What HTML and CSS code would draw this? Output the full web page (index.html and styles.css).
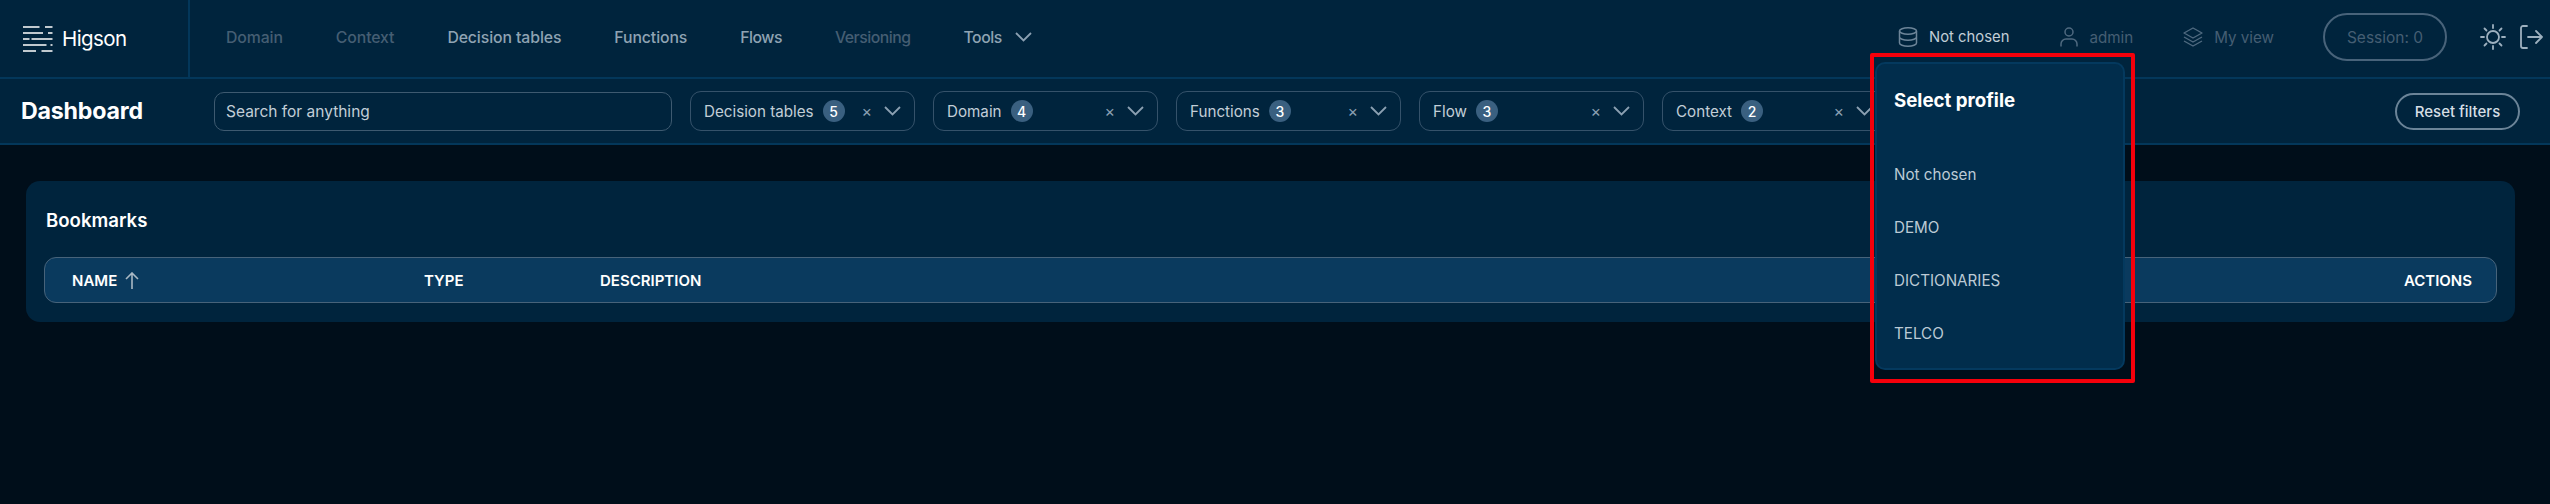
FILE: index.html
```html
<!DOCTYPE html>
<html lang="en">
<head>
<meta charset="utf-8">
<title>Higson Dashboard</title>
<link rel="stylesheet" href="styles.css">
</head>
<body>
<div class="page">
  <header class="topbar">
    <div class="brand">
      <svg class="logo" width="30" height="26" viewBox="0 0 30 26" fill="none" stroke="#fff" stroke-width="1.6">
        <path d="M0 1h16.500M22 1h7.500M0 7h20M25 7h4.500M0 13h6.500M8.500 13h21M0 19h23.500M27.500 19h2M0 25h13M18.500 25h11"/>
      </svg>
      <span class="brand-name">Higson</span>
    </div>
    <nav class="nav">
      <span class="nav-item muted">Domain</span>
      <span class="nav-item muted">Context</span>
      <span class="nav-item">Decision tables</span>
      <span class="nav-item">Functions</span>
      <span class="nav-item tight">Flows</span>
      <span class="nav-item muted tight">Versioning</span>
      <span class="nav-item tight tools">Tools
        <svg width="17" height="10" viewBox="0 0 17 10" fill="none" stroke="#8ba0b2" stroke-width="1.800"><path d="M1 1l7.500 7.500L16 1"/></svg>
      </span>
    </nav>
    <div class="user">
      <span class="user-item active">
        <svg width="20" height="20" viewBox="0 0 20 20" fill="none" stroke="#6d8599" stroke-width="1.500"><ellipse cx="10" cy="4" rx="8.500" ry="3.200"/><path d="M1.500 4v12c0 1.800 3.800 3.200 8.500 3.200s8.500-1.400 8.500-3.200V4M1.500 10c0 1.800 3.800 3.200 8.500 3.200s8.500-1.400 8.500-3.200"/></svg>
        Not chosen
      </span>
      <span class="user-item dim admin">
        <svg width="18" height="20" viewBox="0 0 18 20" fill="none" stroke="#4f6a80" stroke-width="1.500"><circle cx="9" cy="5" r="4"/><path d="M1 19.500v-2.500a5 5 0 0 1 5-5h6a5 5 0 0 1 5 5v2.500"/></svg>
        admin
      </span>
      <span class="user-item dim last">
        <svg width="20" height="20" viewBox="0 0 20 20" fill="none" stroke="#4f6a80" stroke-width="1.400" stroke-linejoin="round"><path d="M10 1l9 5-9 5-9-5zM1 10l9 5 9-5M1 14l9 5 9-5"/></svg>
        My view
      </span>
      <span class="session">Session: 0</span>
      <svg class="sun" width="26" height="26" viewBox="0 0 26 26" fill="none" stroke="#9db0bf" stroke-width="1.800" stroke-linecap="round"><circle cx="13" cy="13" r="6"/><path d="M13 1v3M13 22v3M1 13h3M22 13h3M4.500 4.500l2 2M19.500 19.500l2 2M4.500 21.500l2-2M19.500 6.500l2-2"/></svg>
      <svg width="23" height="24" viewBox="0 0 23 24" fill="none" stroke="#9db0bf" stroke-width="1.800" stroke-linecap="round" stroke-linejoin="round"><path d="M7 1H3a2 2 0 0 0-2 2v18a2 2 0 0 0 2 2h4M8 12h14M16 6l6 6-6 6"/></svg>
    </div>
  </header>

  <section class="filterbar">
    <h1 class="title">Dashboard</h1>
    <div class="search">Search for anything</div>
    <div class="filter"><span>Decision tables</span><b class="badge">5</b><i class="clear">×</i><svg class="chev" width="17" height="10" viewBox="0 0 17 10" fill="none" stroke="#8ba0b2" stroke-width="1.800"><path d="M1 1l7.500 7.500L16 1"/></svg></div>
    <div class="filter"><span>Domain</span><b class="badge">4</b><i class="clear">×</i><svg class="chev" width="17" height="10" viewBox="0 0 17 10" fill="none" stroke="#8ba0b2" stroke-width="1.800"><path d="M1 1l7.500 7.500L16 1"/></svg></div>
    <div class="filter"><span>Functions</span><b class="badge">3</b><i class="clear">×</i><svg class="chev" width="17" height="10" viewBox="0 0 17 10" fill="none" stroke="#8ba0b2" stroke-width="1.800"><path d="M1 1l7.500 7.500L16 1"/></svg></div>
    <div class="filter"><span>Flow</span><b class="badge">3</b><i class="clear">×</i><svg class="chev" width="17" height="10" viewBox="0 0 17 10" fill="none" stroke="#8ba0b2" stroke-width="1.800"><path d="M1 1l7.500 7.500L16 1"/></svg></div>
    <div class="filter"><span>Context</span><b class="badge">2</b><i class="clear">×</i><svg class="chev" width="17" height="10" viewBox="0 0 17 10" fill="none" stroke="#8ba0b2" stroke-width="1.800"><path d="M1 1l7.500 7.500L16 1"/></svg></div>
    <button class="reset">Reset filters</button>
  </section>

  <main class="main">
    <section class="card">
      <h2 class="card-title">Bookmarks</h2>
      <div class="thead">
        <span class="col col-name">NAME
          <svg width="14" height="17" viewBox="0 0 14 17" fill="none" stroke="#a9b8c4" stroke-width="1.600"><path d="M7 17V1M1 7l6-6 6 6"/></svg>
        </span>
        <span class="col col-type">TYPE</span>
        <span class="col col-desc">DESCRIPTION</span>
        <span class="col col-actions">ACTIONS</span>
      </div>
    </section>
  </main>

  <div class="dropdown">
    <div class="dd-title">Select profile</div>
    <ul class="dd-list">
      <li>Not chosen</li>
      <li>DEMO</li>
      <li>DICTIONARIES</li>
      <li>TELCO</li>
    </ul>
  </div>
  <div class="highlight"></div>
</div>
</body>
</html>
```
FILE: styles.css
```css
* { box-sizing: border-box; }
html, body { margin: 0; padding: 0; }
body {
  background: #000e1a;
  font-family: "Inter", "Liberation Sans", sans-serif;
  color: #fff;
  width: 2550px;
  height: 504px;
  overflow: hidden;
}
.page { position: relative; height: 504px; }

.topbar {
  display: flex;
  align-items: stretch;
  height: 79px;
  background: #00243d;
  border-bottom: 2px solid #03375a;
}
.brand {
  display: flex;
  align-items: center;
  gap: 9px;
  width: 190px;
  padding-left: 23px;
  border-right: 2px solid #03375a;
}
.logo { display: block; }
.brand-name { font-size: 20.500px; letter-spacing: -0.6px; color: #fff; }
.nav {
  display: flex;
  align-items: center;
  gap: 53px;
  padding-left: 36px;
  padding-bottom: 3px;
}
.nav-item { font-size: 15.800px; font-weight: 500; color: #8fa3b3; letter-spacing: -0.1px; }
.nav-item.muted { color: #455e73; }
.nav-item.tight { letter-spacing: -0.5px; }
.tools { display: flex; align-items: center; gap: 13px; }
.user {
  display: flex;
  align-items: center;
  margin-left: auto;
  padding-right: 7px;
  padding-bottom: 3px;
}
.user-item { display: flex; align-items: center; gap: 11px; font-size: 15.200px; margin-right: 51px; }
.user-item.admin { margin-right: 50px; }
.user-item.last { margin-right: 49px; }
.user-item.active { color: #c2ced7; font-size: 14.800px; }
.user-item.dim { color: #455e73; }
.session {
  display: flex;
  align-items: center;
  justify-content: center;
  width: 124px;
  height: 48px;
  border: 2px solid #48637a;
  border-radius: 24px;
  font-size: 15.500px;
  color: #455e73;
  margin-right: 33px;
}
.sun { margin-right: 14px; }

.filterbar {
  display: flex;
  align-items: center;
  gap: 18px;
  height: 66px;
  padding: 0 30px 0 21px;
  background: #00243d;
  border-bottom: 2px solid #03375a;
}
.title { margin: 0 54px 0 0; font-size: 23.200px; font-weight: 700; width: 121px; white-space: nowrap; letter-spacing: -0.2px; }
.search {
  display: flex;
  align-items: center;
  width: 458px;
  height: 39px;
  padding-left: 11px;
  border: 1px solid #3e5a70;
  border-radius: 10px;
  font-size: 15.500px;
  color: #c2ced7;
}
.filter {
  display: flex;
  align-items: center;
  flex: none;
  width: 225px;
  height: 40px;
  padding: 0 13px;
  border: 1px solid #35526a;
  border-radius: 11px;
  font-size: 15.200px;
  color: #c2ced7;
}
.badge {
  display: flex;
  align-items: center;
  justify-content: center;
  width: 22px;
  height: 22px;
  margin-left: 9px;
  border-radius: 50%;
  background: #3a6080;
  color: #fff;
  font-size: 14px;
  font-weight: 500;
}
.clear {
  margin-left: auto;
  margin-right: 12px;
  font-style: normal;
  font-size: 16px;
  color: #8ba0b2;
}
.chev { flex: none; }
.reset {
  flex: none;
  width: 125px;
  height: 37px;
  margin-left: auto;
  background: transparent;
  border: 2px solid #6b8498;
  border-radius: 19px;
  font-family: inherit;
  font-size: 15px;
  font-weight: 500;
  color: #d5dee5;
}

.main { padding: 36px 35px 0 26px; }
.card {
  height: 141px;
  padding: 26px 18px 0 18px;
  background: #00243d;
  border-radius: 14px;
}
.card-title { margin: 0 0 24px 2px; font-size: 18.600px; line-height: 26px; font-weight: 600; }
.thead {
  display: flex;
  align-items: center;
  height: 46px;
  padding: 0 24px 0 27px;
  background: #0a3a5e;
  border: 1px solid #47637a;
  border-radius: 12px;
  font-size: 15px;
  font-weight: 600;
}
.col { display: flex; align-items: center; gap: 8px; }
.col-name { width: 352px; }
.col-type { width: 176px; }
.col-actions { margin-left: auto; }

.dropdown {
  position: absolute;
  left: 1875px;
  top: 62px;
  width: 250px;
  height: 308px;
  padding: 25px 17px 0;
  background: #012d4c;
  border: 2px solid #04395e;
  border-radius: 10px;
}
.dd-title { font-size: 18.700px; line-height: 24px; font-weight: 700; }
.dd-list { list-style: none; margin: 35px 0 0; padding: 0; }
.dd-list li { height: 53px; display: flex; align-items: center; font-size: 15.200px; color: #bccad5; }
.highlight {
  position: absolute;
  left: 1870px;
  top: 53px;
  width: 265px;
  height: 330px;
  border: 4px solid #f5000b;
  border-radius: 2px;
}
```
